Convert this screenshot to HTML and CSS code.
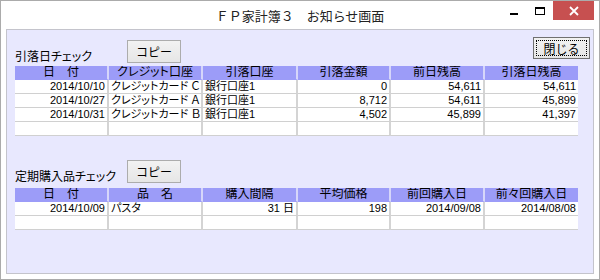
FILE: index.html
```html
<!DOCTYPE html>
<html lang="ja">
<head>
  <meta charset="UTF-8">
  <title>お知らせ画面</title>
  <link rel="stylesheet" href="styles.css">
</head>
<body>
  <div class="window">
    <div class="titlebar">
      <span></span>
      <span class="title">ＦＰ家計簿３　お知らせ画面</span>
      <div class="controls">
        <span class="ctl"><span class="min-icon"></span></span>
        <span class="ctl"><span class="max-icon"></span></span>
        <span class="ctl close">
          <svg width="10" height="10" viewBox="0 0 10 10">
            <path d="M1 1 L9 9 M9 1 L1 9" stroke="#fff" stroke-width="1.8"/>
          </svg>
        </span>
      </div>
    </div>

    <div class="client">
      <div class="bar">
        <span class="label">引落日チェック</span>
        <button class="btn">コピー</button>
        <button class="btn close-btn"><span class="focus">閉じる</span></button>
      </div>
      <div class="grid">
        <div class="h">日　付</div>
        <div class="h">クレジット口座</div>
        <div class="h">引落口座</div>
        <div class="h">引落金額</div>
        <div class="h">前日残高</div>
        <div class="h">引落日残高</div>

        <div class="r">2014/10/10</div>
        <div>クレジットカード Ｃ</div>
        <div>銀行口座1</div>
        <div class="r">0</div>
        <div class="r">54,611</div>
        <div class="r">54,611</div>

        <div class="r">2014/10/27</div>
        <div>クレジットカード Ａ</div>
        <div>銀行口座1</div>
        <div class="r">8,712</div>
        <div class="r">54,611</div>
        <div class="r">45,899</div>

        <div class="r">2014/10/31</div>
        <div>クレジットカード Ｂ</div>
        <div>銀行口座1</div>
        <div class="r">4,502</div>
        <div class="r">45,899</div>
        <div class="r">41,397</div>

        <div></div><div></div><div></div><div></div><div></div><div></div>
      </div>

      <div class="bar bar-second">
        <span class="label">定期購入品チェック</span>
        <button class="btn">コピー</button>
      </div>
      <div class="grid grid-second">
        <div class="h">日　付</div>
        <div class="h">品　名</div>
        <div class="h">購入間隔</div>
        <div class="h">平均価格</div>
        <div class="h">前回購入日</div>
        <div class="h">前々回購入日</div>

        <div class="r">2014/10/09</div>
        <div>パスタ</div>
        <div class="r">31 日</div>
        <div class="r">198</div>
        <div class="r">2014/09/08</div>
        <div class="r">2014/08/08</div>

        <div></div><div></div><div></div><div></div><div></div><div></div>
      </div>
    </div>
  </div>
</body>
</html>
```

FILE: styles.css
```css
body {
  margin: 0;
  width: 600px;
  height: 280px;
  overflow: hidden;
  font-family: "Liberation Sans", "Noto Sans CJK JP", sans-serif;
  color: #000;
}

.window {
  box-sizing: border-box;
  width: 600px;
  height: 280px;
  border: 1px solid #ABABAB;
  background-color: #FFFFFF;
  padding: 0 5px 5px;
  display: flex;
  flex-direction: column;
}

.titlebar {
  height: 28px;
  margin: 0 -5px;
  display: grid;
  grid-template-columns: 1fr auto 1fr;
}

.title {
  font-family: "Noto Sans CJK JP", sans-serif;
  font-size: 13px;
  line-height: 30px;
  color: #222;
}

.controls {
  display: flex;
  justify-content: flex-end;
  align-items: flex-start;
  margin-right: 5px;
}

.ctl {
  width: 26px;
  height: 19px;
  display: flex;
  align-items: center;
  justify-content: center;
}

.min-icon {
  width: 8px;
  height: 2px;
  background-color: #000;
  margin-top: 7px;
}

.max-icon {
  box-sizing: border-box;
  width: 10px;
  height: 8px;
  border: 1px solid #000;
  border-top-width: 2px;
}

.ctl.close {
  width: 41px;
  background-color: #C75050;
}

.client {
  flex: 1;
  border: 1px solid #C4C4CC;
  background-color: #E8E8FE;
  padding: 7px 3px 0 8px;
}

.bar {
  display: flex;
  align-items: flex-end;
  height: 26px;
}

.bar-second {
  height: 23px;
  margin-top: 24px;
}

.label {
  width: 112px;
  flex-shrink: 0;
  font-family: "Noto Sans CJK JP", sans-serif;
  font-feature-settings: "palt";
  font-size: 12px;
  line-height: 14px;
  margin-left: -1px;
  padding-left: 1px;
}

.btn {
  box-sizing: border-box;
  width: 54px;
  height: 23px;
  padding: 0;
  border: 1px solid #ACACAC;
  background: linear-gradient(#F2F2F2, #E6E6E6);
  font-family: "Noto Sans CJK JP", sans-serif;
  font-size: 12px;
  color: #000;
}

.close-btn {
  width: 57px;
  height: 22px;
  padding: 2px;
  margin-left: auto;
  align-self: flex-start;
  border-color: #707070;
}

.close-btn .focus {
  box-sizing: border-box;
  display: flex;
  height: 100%;
  align-items: center;
  justify-content: center;
  border: 1px dotted #000;
}

.grid {
  display: grid;
  grid-template-columns: 94px 94px 95px 93px 94px 93px;
  grid-auto-rows: 14px;
  width: 563px;
  margin-top: 3px;
  font-size: 11px;
}

.grid-second {
  margin-top: 5px;
}

.grid > div {
  box-sizing: border-box;
  background-color: #FFFFFF;
  border-right: 2px solid #D4D4D4;
  border-bottom: 1px solid #D0D0D0;
  padding: 0 2px;
  line-height: 13px;
  white-space: nowrap;
  overflow: hidden;
  font-feature-settings: "palt";
}

.grid > div:nth-child(6n) {
  border-right: none;
}

.grid > .h {
  background-color: #9C9CF8;
  border-right-color: #D6D6FA;
  border-bottom-color: #9C9CF8;
  text-align: center;
  font-size: 12px;
}

.grid > .r {
  text-align: right;
}
```
